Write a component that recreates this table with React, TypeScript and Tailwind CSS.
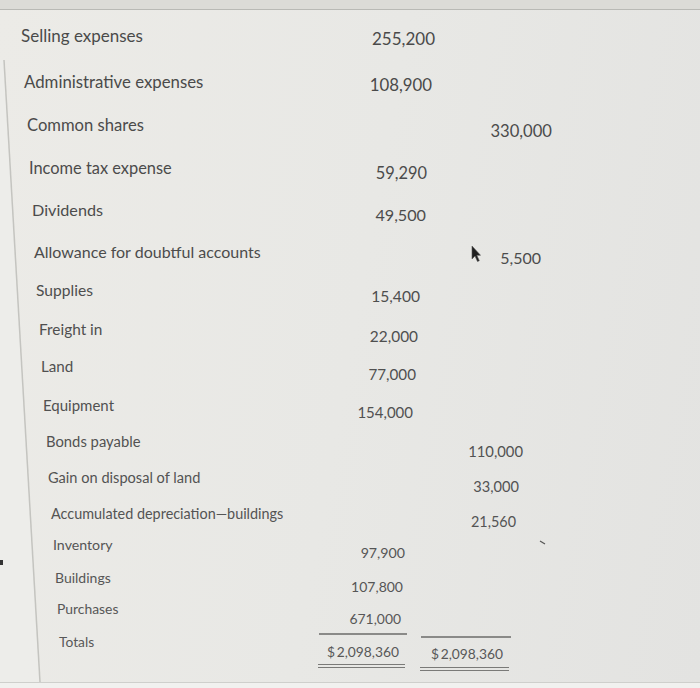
import React from "react";

type Row = {
  label: string;
  row: string;
  lab: string;
  debit: string;
  dCls: string;
  credit: string;
  cCls: string;
};

const rows: Row[] = [
  { label: "Selling expenses", row: "h-[46px] text-[17px] text-[#4a4a4a]", lab: "pl-[21px]", debit: "255,200", dCls: "w-[135px] pt-[3px]", credit: "", cCls: "w-[126px]" },
  { label: "Administrative expenses", row: "h-[43px] text-[16.8px] text-[#4a4a4a]", lab: "pl-[24px]", debit: "108,900", dCls: "w-[132px] pt-[3px]", credit: "", cCls: "w-[125px]" },
  { label: "Common shares", row: "h-[43px] text-[16.6px] text-[#4b4b4b]", lab: "pl-[27px]", debit: "", dCls: "w-[130px]", credit: "330,000", cCls: "w-[122px] pt-[6px]" },
  { label: "Income tax expense", row: "h-[42px] text-[16.4px] text-[#4b4b4b]", lab: "pl-[29px]", debit: "59,290", dCls: "w-[127px] pt-[5px]", credit: "", cCls: "w-[121px]" },
  { label: "Dividends", row: "h-[42px] text-[16.2px] text-[#4c4c4c]", lab: "pl-[32px]", debit: "49,500", dCls: "w-[126px] pt-[5px]", credit: "", cCls: "w-[118px]" },
  { label: "Allowance for doubtful accounts", row: "h-[38px] text-[16px] text-[#4c4c4c]", lab: "pl-[34px]", debit: "", dCls: "w-[123px]", credit: "5,500", cCls: "w-[118px] pt-[6px]" },
  { label: "Supplies", row: "h-[39px] text-[15.6px] text-[#4e4e4e]", lab: "pl-[36px]", debit: "15,400", dCls: "w-[120px] pt-[6px]", credit: "", cCls: "w-[117px]" },
  { label: "Freight in", row: "h-[37px] text-[15.4px] text-[#4f4f4f]", lab: "pl-[39px]", debit: "22,000", dCls: "w-[118px] pt-[7px]", credit: "", cCls: "w-[116px]" },
  { label: "Land", row: "h-[39px] text-[15.2px] text-[#505050]", lab: "pl-[41px]", debit: "77,000", dCls: "w-[116px] pt-[8px]", credit: "", cCls: "w-[114px]" },
  { label: "Equipment", row: "h-[36px] text-[15px] text-[#515151]", lab: "pl-[43px]", debit: "154,000", dCls: "w-[113px] pt-[7px]", credit: "", cCls: "w-[114px]" },
  { label: "Bonds payable", row: "h-[37px] text-[14.8px] text-[#525252]", lab: "pl-[46px]", debit: "", dCls: "w-[111px]", credit: "110,000", cCls: "w-[112px] pt-[10px]" },
  { label: "Gain on disposal of land", row: "h-[36px] text-[14.6px] text-[#535353]", lab: "pl-[48px]", debit: "", dCls: "w-[109px]", credit: "33,000", cCls: "w-[110px] pt-[9px]" },
  { label: "Accumulated depreciation\u2014buildings", row: "h-[31px] text-[14.4px] text-[#545454]", lab: "pl-[51px]", debit: "", dCls: "w-[107px]", credit: "21,560", cCls: "w-[109px] pt-[8px]" },
  { label: "Inventory", row: "h-[33px] text-[14.2px] text-[#555555]", lab: "pl-[53px]", debit: "97,900", dCls: "w-[105px] pt-[8px]", credit: "", cCls: "w-[108px]" },
  { label: "Buildings", row: "h-[31px] text-[14px] text-[#565656]", lab: "pl-[55px]", debit: "107,800", dCls: "w-[103px] pt-[9px]", credit: "", cCls: "w-[107px]" },
  { label: "Purchases", row: "h-[33px] text-[13.9px] text-[#575757]", lab: "pl-[57px]", debit: "671,000", dCls: "w-[101px] pt-[10px]", credit: "", cCls: "w-[106px]" },
];

export default function App() {
  return (
    <div className="relative w-[700px] h-[688px] overflow-hidden flex flex-col bg-[linear-gradient(100deg,#ecebe7_0%,#e8e8e5_50%,#e3e3e1_100%)] [font-family:Lato,'Open_Sans',sans-serif]">
      <div className="h-[10px] shrink-0 bg-[#dcdbd7] border-b border-[#b9b9b5]" />
      <div className="flex-1 flex flex-col pt-[16px]">
        {rows.map((r) => (
          <div key={r.label} className={`flex items-start leading-[20px] shrink-0 ${r.row}`}>
            <div className={`w-[300px] shrink-0 whitespace-nowrap ${r.lab}`}>{r.label}</div>
            <div className={`shrink-0 text-right ${r.dCls}`}>{r.debit}</div>
            <div className={`shrink-0 text-right ${r.cCls}`}>{r.credit}</div>
          </div>
        ))}
        <div className="flex items-start leading-[20px] text-[13.8px] text-[#585858] shrink-0">
          <div className="w-[319px] shrink-0 pl-[59px]">Totals</div>
          <div className="w-[88px] shrink-0 flex flex-col">
            <div className="mt-[1px] border-t-2 border-[#8a8a88]" />
            <div className="pt-[7px] pr-[8px] text-right whitespace-nowrap">$&thinsp;2,098,360</div>
            <div className="mt-[2px] h-[4px] border-y border-[#7a7a78] w-[87px] -ml-[1px]" />
          </div>
          <div className="w-[90px] shrink-0 ml-[14px] flex flex-col">
            <div className="mt-[4px] border-t-2 border-[#8a8a88]" />
            <div className="pt-[6px] pr-[8px] text-right whitespace-nowrap">$&thinsp;2,098,360</div>
            <div className="mt-[3px] h-[4px] border-y border-[#7a7a78] w-[89px] -ml-[1px]" />
          </div>
        </div>
      </div>
      <div className="h-[6px] shrink-0 bg-[#f1f1ef] border-t border-[#cfcfcc]" />

      <svg className="absolute inset-0 pointer-events-none" width="700" height="688" viewBox="0 0 700 688">
        <polygon points="0,60 4,60 40,682 0,682" fill="#efefec" opacity="0.6" />
        <line x1="4" y1="60" x2="40" y2="682" stroke="#c4c4c0" strokeWidth="1.5" />
        <path d="M0 560 h3 v5 h-3z" fill="#333" />
        <path d="M540 541 l5 3" stroke="#555" strokeWidth="1.2" />
      </svg>

      <svg className="absolute left-[471px] top-[245px] pointer-events-none" width="10" height="18" viewBox="0 0 10 18">
        <path d="M1 1 L1 14 L4 11 L6.5 16.5 L8.3 15.7 L5.8 10.3 L9.5 10.3 Z" fill="#1f1f1f" stroke="#555" strokeWidth="0.6" />
      </svg>
    </div>
  );
}
